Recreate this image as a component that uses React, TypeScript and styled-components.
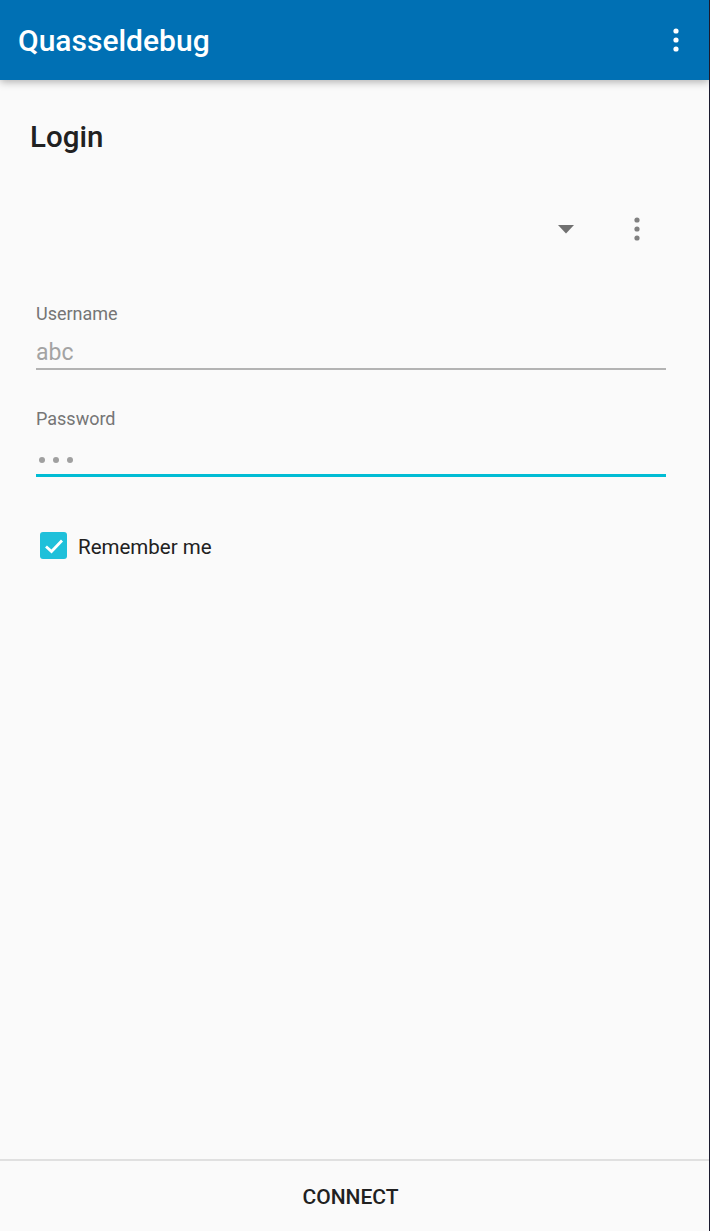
import React from "react";
import styled, { createGlobalStyle } from "styled-components";

const Global = createGlobalStyle`
  html, body { margin: 0; padding: 0; background: #fafafa; }
  * { box-sizing: border-box; }
  body { font-family: Roboto, "Noto Sans", Arial, sans-serif; }
`;

const Screen = styled.div`
  width: 710px;
  height: 1231px;
  display: flex;
  flex-direction: column;
  background: #fafafa;
  border-right: 1px solid #1a1a2e;
  overflow: hidden;
`;

const AppBar = styled.header`
  height: 80px;
  flex: none;
  display: flex;
  align-items: center;
  justify-content: space-between;
  padding: 0 30px 0 18px;
  background: #0070b4;
  box-shadow: 0 2px 8px rgba(0, 0, 0, 0.3);
  position: relative;
  z-index: 1;
`;

const Title = styled.h1`
  margin: 0;
  font-size: 30px;
  font-weight: 500;
  color: #ffffff;
`;

const Content = styled.main`
  flex: 1;
  display: flex;
  flex-direction: column;
  padding: 0 43px 0 30px;
`;

const Heading = styled.h2`
  margin: 40px 0 0;
  font-size: 29.5px;
  font-weight: 500;
  color: #212121;
  line-height: 34px;
`;

const SpinnerRow = styled.div`
  height: 54px;
  margin-top: 48px;
  display: flex;
  align-items: center;
  justify-content: flex-end;
  gap: 60px;
  padding-right: 26px;
`;

const Field = styled.div<{ $top: number }>`
  margin-top: ${(p) => p.$top}px;
  padding-left: 6px;
  display: flex;
  flex-direction: column;
`;

const Label = styled.label`
  font-size: 18px;
  color: #757575;
  line-height: 20px;
`;

const Value = styled.div`
  font-size: 23px;
  color: #a3a3a3;
  line-height: 28px;
  margin-top: 15px;
  height: 28px;
  display: flex;
  align-items: center;
`;

const Underline = styled.div<{ $focused?: boolean }>`
  height: ${(p) => (p.$focused ? 3 : 2)}px;
  background: ${(p) => (p.$focused ? "#00bcd4" : "#b3b3b3")};
  margin-top: ${(p) => (p.$focused ? 2 : 1)}px;
`;

const Dots = styled.div`
  display: flex;
  gap: 8px;
  margin: 4px 0 0 3px;
`;

const Dot = styled.span`
  width: 6px;
  height: 6px;
  border-radius: 50%;
  background: #a0a0a0;
`;

const CheckRow = styled.div`
  margin-top: 55px;
  padding-left: 10px;
  display: flex;
  align-items: center;
  gap: 11px;
`;

const CheckBox = styled.span`
  width: 27px;
  height: 27px;
  border-radius: 3px;
  background: #1fc0da;
  display: flex;
  align-items: center;
  justify-content: center;
`;

const CheckLabel = styled.span`
  font-size: 20.5px;
  color: #212121;
  margin-top: 2px;
`;

const Footer = styled.footer`
  height: 72px;
  flex: none;
  border-top: 2px solid #e0e0e0;
  display: flex;
  align-items: center;
  justify-content: center;
`;

const ConnectButton = styled.button`
  border: none;
  background: transparent;
  font-family: Roboto, "Noto Sans", Arial, sans-serif;
  font-size: 21px;
  font-weight: 500;
  color: #212121;
  padding: 8px 16px;
  margin-top: 2px;
  margin-right: 8px;
`;

const VDots = ({ color, size }: { color: string; size: number }) => (
  <svg width={size} height={size * 4} viewBox="0 0 6 24">
    <circle cx="3" cy="3" r="2.6" fill={color} />
    <circle cx="3" cy="12" r="2.6" fill={color} />
    <circle cx="3" cy="21" r="2.6" fill={color} />
  </svg>
);

export default function App() {
  return (
    <>
      <Global />
      <Screen>
        <AppBar>
          <Title>Quasseldebug</Title>
          <VDots color="#ffffff" size={6} />
        </AppBar>
        <Content>
          <Heading>Login</Heading>
          <SpinnerRow>
            <svg width="16" height="9" viewBox="0 0 16 9">
              <path d="M0 0 L16 0 L8 8.5 Z" fill="#707070" />
            </svg>
            <VDots color="#808080" size={6} />
          </SpinnerRow>
          <Field $top={48}>
            <Label>Username</Label>
            <Value>abc</Value>
            <Underline />
          </Field>
          <Field $top={39}>
            <Label>Password</Label>
            <Value>
              <Dots>
                <Dot />
                <Dot />
                <Dot />
              </Dots>
            </Value>
            <Underline $focused />
          </Field>
          <CheckRow>
            <CheckBox>
              <svg width="20" height="16" viewBox="0 0 20 16">
                <path d="M2 8.5 L7.5 13.5 L18 2.5" stroke="#ffffff" strokeWidth="2.8" fill="none" />
              </svg>
            </CheckBox>
            <CheckLabel>Remember me</CheckLabel>
          </CheckRow>
        </Content>
        <Footer>
          <ConnectButton>CONNECT</ConnectButton>
        </Footer>
      </Screen>
    </>
  );
}
